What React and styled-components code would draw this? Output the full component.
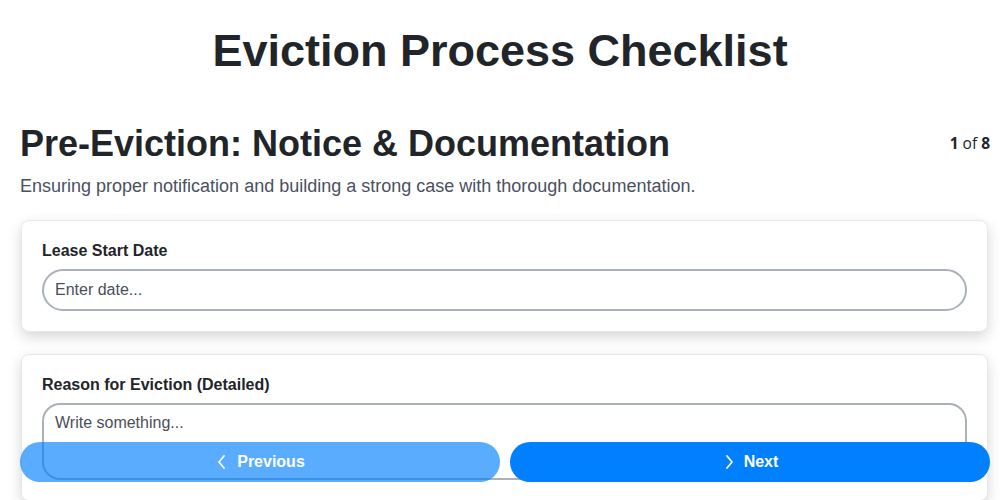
import { useState } from "react";
import styled, { createGlobalStyle } from "styled-components";

const GlobalStyle = createGlobalStyle`
  * { box-sizing: border-box; }
  body {
    margin: 0;
    background: #ffffff;
    font-family: "Liberation Sans", Arial, sans-serif;
    color: #212529;
  }
`;

const Page = styled.div`
  padding-bottom: 80px;
`;

const Content = styled.main`
  padding: 0 10px 0 20px;
`;

const Title = styled.h1`
  margin: 0;
  padding-top: 25px;
  text-align: center;
  font-size: 45px;
  line-height: 52px;
  font-weight: 700;
  color: #212529;
`;

const SectionHead = styled.div`
  display: flex;
  justify-content: space-between;
  align-items: flex-start;
  margin-top: 46px;
`;

const SectionTitle = styled.h2`
  margin: 0;
  font-size: 36px;
  line-height: 42px;
  font-weight: 700;
`;

const Counter = styled.div`
  font-family: "Open Sans", "Liberation Sans", sans-serif;
  font-size: 15.5px;
  line-height: 20px;
  padding-top: 10px;
  color: #212529;
  b { font-weight: 700; }
`;

const Subtitle = styled.p`
  margin: 9px 0 0;
  font-size: 18px;
  line-height: 24px;
  color: #4a5160;
`;

const Card = styled.div`
  margin: 22px 2px 0 1px;
  background: #fff;
  border: 1px solid #e6e8ec;
  border-radius: 8px;
  box-shadow: 0 5px 14px rgba(0, 0, 0, 0.16);
  padding: 21px 20px 20px;
`;

const Label = styled.label`
  display: block;
  font-size: 16px;
  line-height: 18px;
  font-weight: 700;
  margin-bottom: 9px;
  color: #212529;
`;

const Input = styled.input`
  display: block;
  width: 100%;
  height: 42px;
  padding: 0 11px;
  border: 2px solid #aab1ba;
  border-radius: 21px;
  font-family: inherit;
  font-size: 16px;
  color: #212529;
  outline: none;
  &::placeholder { color: #4a4f57; }
`;

const TextArea = styled.textarea`
  display: block;
  width: 100%;
  height: 77px;
  padding: 9px 11px;
  border: 2px solid #aab1ba;
  border-radius: 18px;
  font-family: inherit;
  font-size: 16px;
  resize: none;
  outline: none;
  &::placeholder { color: #4a4f57; }
`;

const NavBar = styled.div`
  position: fixed;
  left: 20px;
  right: 10px;
  bottom: 18px;
  display: grid;
  grid-template-columns: 1fr 1fr;
  gap: 10px;
`;

const NavButton = styled.button`
  height: 40px;
  border: none;
  border-radius: 20px;
  background: #0080ff;
  opacity: ${(p) => (p.$dim ? 0.65 : 1)};
  color: #fff;
  font-family: inherit;
  font-size: 16px;
  font-weight: 700;
  display: flex;
  align-items: center;
  justify-content: center;
  gap: 8px;
  cursor: pointer;
`;

const Chevron = ({ dir }) => (
  <svg width="14" height="16" viewBox="0 0 14 16" fill="none">
    <path
      d={dir === "left" ? "M9 2 L4 8 L9 14" : "M5 2 L10 8 L5 14"}
      stroke="#fff"
      strokeWidth="1.8"
      strokeLinecap="round"
      strokeLinejoin="round"
    />
  </svg>
);

const App = () => {
  const [step, setStep] = useState(1);
  const total = 8;

  return (
    <Page>
      <GlobalStyle />
      <Title>Eviction Process Checklist</Title>
      <Content>
        <SectionHead>
          <SectionTitle>Pre-Eviction: Notice &amp; Documentation</SectionTitle>
          <Counter>
            <b>{step}</b> of <b>{total}</b>
          </Counter>
        </SectionHead>
        <Subtitle>
          Ensuring proper notification and building a strong case with thorough
          documentation.
        </Subtitle>

        <Card>
          <Label>Lease Start Date</Label>
          <Input placeholder="Enter date..." />
        </Card>

        <Card>
          <Label>Reason for Eviction (Detailed)</Label>
          <TextArea placeholder="Write something..." />
        </Card>
      </Content>

      <NavBar>
        <NavButton $dim onClick={() => setStep((s) => Math.max(1, s - 1))}>
          <Chevron dir="left" />
          Previous
        </NavButton>
        <NavButton onClick={() => setStep((s) => Math.min(total, s + 1))}>
          <Chevron dir="right" />
          Next
        </NavButton>
      </NavBar>
    </Page>
  );
};

export default App;
